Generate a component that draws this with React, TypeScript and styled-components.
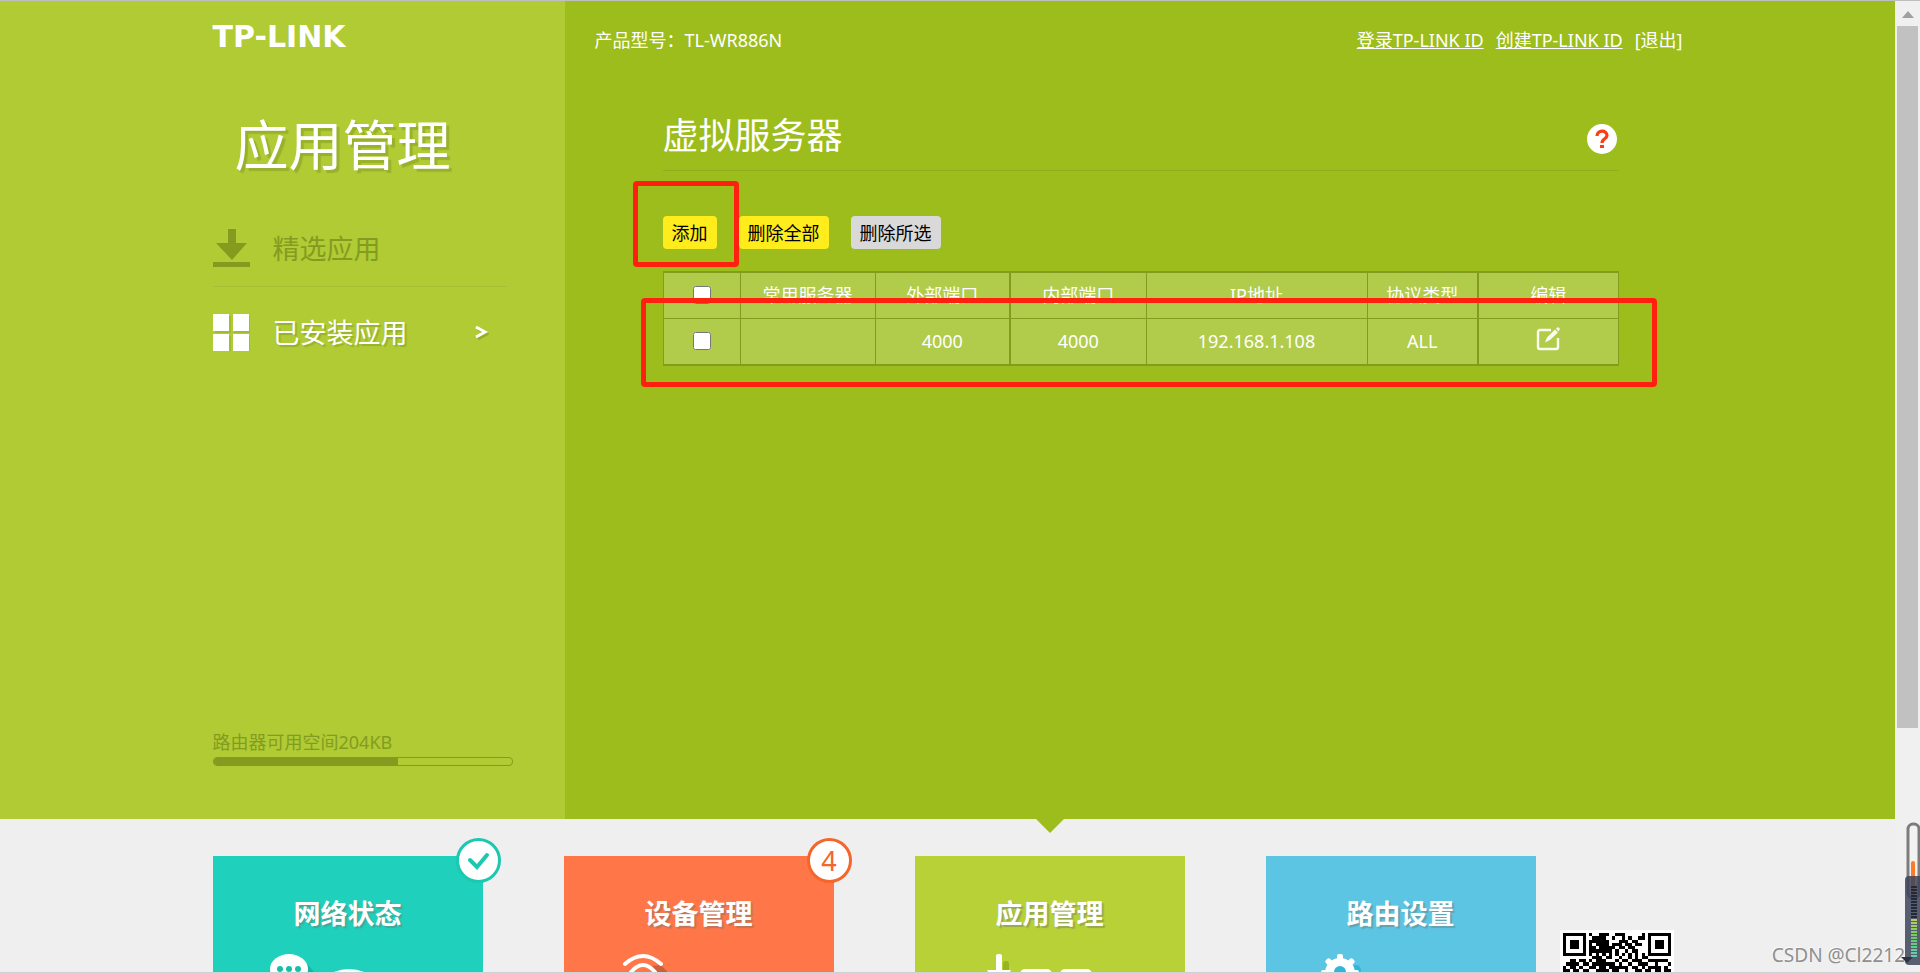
import React from "react";
import styled, { createGlobalStyle } from "styled-components";

const GlobalStyle = createGlobalStyle`
  * { box-sizing: border-box; }
  html, body, #root { height: 100%; }
  body {
    margin: 0;
    overflow: hidden;
    background: #efefef;
    color: #fff;
    font-family: "Noto Sans", "Noto Sans CJK SC", sans-serif;
    font-size: 18px;
    line-height: 24px;
  }
  a { color: inherit; }
  h1, h2, h3, p, ul { margin: 0; padding: 0; }
  button { font: inherit; border: 0; padding: 0; background: none; cursor: pointer; }
`;

const Window = styled.div`
  position: relative;
  display: flex;
  height: 100vh;
  overflow: hidden;
  border-top: 1px solid #bfbfbf;
  border-bottom: 1px solid #cdd1d8;
`;

const Page = styled.div`
  flex: 1;
  min-width: 0;
  display: flex;
  flex-direction: column;
`;

const Panels = styled.div`
  flex: 1;
  display: flex;
  min-height: 0;
`;

const Sidebar = styled.aside`
  width: calc(50% - 383px);
  min-width: 352px;
  display: flex;
  justify-content: flex-end;
  background: #b0cb34;
`;

const SidebarInner = styled.div`
  width: 352px;
  padding: 20px 52px 53px 0;
  display: flex;
  flex-direction: column;
`;

const Logo = styled.div`
  font-family: "DejaVu Sans", sans-serif;
  font-weight: 700;
  font-size: 30px;
  line-height: 32px;
`;

const Heading = styled.h1`
  margin: 60px 0 0 22px;
  font-size: 54px;
  line-height: 64px;
  font-weight: 400;
  text-shadow: 3px 3px 1px #98b12c;
`;

const Menu = styled.ul`
  list-style: none;
  width: 294px;
  margin-top: 34px;
`;

const MenuItem = styled.li<{ $active?: boolean }>`
  height: 75px;
  & + & {
    height: 93px;
    border-top: 1px solid #a6bf34;
  }
  a {
    display: flex;
    align-items: center;
    height: 100%;
    font-size: 27px;
    line-height: 36px;
    text-decoration: none;
    color: ${(p) => (p.$active ? "#fff" : "#839c20")};
    text-shadow: ${(p) => (p.$active ? "2px 2px 1px #98b12c" : "none")};
  }
  span { margin-left: 22px; flex: 1; }
  .chevron { margin-right: 18px; }
`;

const Storage = styled.label`
  margin-top: auto;
  color: #839c20;
  display: block;
`;

const Meter = styled.div`
  width: 300px;
  height: 9px;
  margin-top: 3px;
  border: 1px solid #839c20;
  border-radius: 4px;
  overflow: hidden;
`;

const MeterFill = styled.div`
  height: 100%;
  background: #839c20;
`;

const Main = styled.main`
  flex: 1;
  background: #9dbd1c;
`;

const MainInner = styled.div`
  max-width: 1118px;
`;

const TopBar = styled.header`
  display: flex;
  justify-content: space-between;
  padding: 27px 0 0 30px;
`;

const Links = styled.nav`
  display: flex;
  gap: 12px;
  a:last-child { text-decoration: none; }
`;

const Section = styled.section`
  margin: 55px 64px 0 98px;
`;

const SectionHead = styled.div`
  display: flex;
  align-items: center;
  justify-content: space-between;
  height: 64px;
  padding: 0 2px 5px 0;
  border-bottom: 1px solid #8fae1f;
  h2 { font-size: 36px; line-height: 48px; font-weight: 400; }
`;

const Help = styled.button`
  width: 30px;
  height: 30px;
  margin-top: 5px;
  svg { display: block; }
`;

const Actions = styled.div`
  display: flex;
  gap: 22px;
  margin: 45px 0 22px;
`;

const Button = styled.button<{ $muted?: boolean }>`
  height: 33px;
  padding: 0 9px;
  border-radius: 4px;
  color: #000;
  background: ${(p) => (p.$muted ? "#d9d9d9" : "#ffec1c")};
`;

const Marked = styled.div`
  position: relative;
`;

const Mark = styled.div<{ $inset: string }>`
  position: absolute;
  inset: ${(p) => p.$inset};
  border: 5px solid #ff2010;
  border-radius: 4px;
  pointer-events: none;
`;

const Table = styled.table`
  width: 100%;
  table-layout: fixed;
  border-collapse: collapse;
  background: #b0cc4a;
  border: 2px solid #839c20;
  border-width: 2px 1px;
  th, td {
    height: 46px;
    padding: 0;
    border: 1px solid #839c20;
    font-weight: 400;
    text-align: center;
    vertical-align: middle;
  }
  td { height: 47px; }
  th:nth-child(4), td:nth-child(4), th:nth-child(7), td:nth-child(7) { border-left-width: 2px; }
  input { display: block; width: 18px; height: 18px; margin: 0 auto; }
  td svg { display: block; margin: 0 auto 4px; }
`;

const Footer = styled.footer`
  position: relative;
  height: 153px;
  flex: none;
  display: flex;
  justify-content: center;
  background: #efefef;
  overflow: hidden;
`;

const FooterInner = styled.div`
  width: 1470px;
  flex: none;
  display: flex;
  gap: 24px;
  padding-top: 37px;
`;

const Tiles = styled.nav`
  display: flex;
  gap: 81px;
  flex: none;
`;

const Tile = styled.a<{ $color: string }>`
  position: relative;
  display: block;
  width: 270px;
  height: 270px;
  padding-top: 40px;
  background: ${(p) => p.$color};
  text-align: center;
  text-decoration: none;
  font-size: 27px;
  line-height: 36px;
  font-weight: 700;
  text-shadow: 2px 2px 1px rgba(110, 120, 110, 0.45);
  & > svg { display: block; margin-top: 14px; }
`;

const Badge = styled.span<{ $color: string }>`
  position: absolute;
  top: -18px;
  right: -18px;
  width: 45px;
  height: 45px;
  display: grid;
  place-items: center;
  border: 3px solid ${(p) => p.$color};
  border-radius: 50%;
  background: #fff;
  color: ${(p) => p.$color};
  font-weight: 400;
  text-shadow: none;
`;

const Pointer = styled.span`
  position: absolute;
  top: -37px;
  left: 121px;
  border: 14px solid transparent;
  border-top-color: #9dbd1c;
  border-bottom: 0;
`;

const QrFrame = styled.div`
  margin-top: 74px;
  width: 114px;
  height: 114px;
  padding: 3px;
  background: #fff;
  svg { display: block; }
`;

const ScrollTrack = styled.div`
  width: 25px;
  flex: none;
  display: flex;
  flex-direction: column;
  align-items: center;
  padding-top: 10px;
  background: #f0f0f0;
`;

const ScrollThumb = styled.div`
  width: 21px;
  height: 73%;
  margin-top: 8px;
  background: #c1c1c1;
`;

const Watermark = styled.div`
  position: absolute;
  right: 15px;
  bottom: 5px;
  font-size: 19px;
  color: #8f8f8f;
  text-shadow: -1px -1px 0 #fafafa;
`;

const Gauge = styled.svg`
  position: absolute;
  right: 0;
  bottom: 0;
`;

const QR_TOP = [
  "10011100111000001",
  "01111001001010011",
  "11111100011101100",
  "10111101110110110",
  "11011111011011000",
  "11111110100101100",
  "10101010101010101",
];
const FINDER = ["1111111", "1000001", "1011101", "1011101", "1011101", "1000001", "1111111"];
const QR_ROWS = [
  ...QR_TOP.map((mid, i) => `${FINDER[i]}0${mid}0${FINDER[i]}`),
  "000000000111011001001010110000000",
  "001101101011100010110111001111110",
  "011110110111111101001001110010001",
  "101101001101101111110110101111010",
  "110110110011110110010011011011011",
  "011011011110011011110101101101110",
];

const Qr = () => (
  <svg width="108" height="108" viewBox="0 0 33 33" shapeRendering="crispEdges" aria-hidden="true">
    {QR_ROWS.map((row, y) =>
      [...row].map((bit, x) => (bit === "1" ? <rect key={`${x}-${y}`} x={x} y={y} width="1" height="1" /> : null))
    )}
  </svg>
);

const DownloadIcon = () => (
  <svg width="38" height="40" viewBox="0 0 38 40" fill="#839c20">
    <path d="M15 0h8v14h11L19 31 3 14h12z" />
    <path d="M0 33h37v5H0z" />
  </svg>
);

const GridIcon = () => (
  <svg width="38" height="39" viewBox="0 0 38 39" fill="#fff">
    <path d="M2 2h16v17H2zM21 2h16v17H21zM2 22h16v15H2zM21 22h16v15H21z" fill="#94ad2a" opacity=".5" />
    <path d="M0 0h16v17H0zM20 0h16v17H20zM0 20h16v17H0zM20 20h16v17H20z" />
  </svg>
);

const HelpIcon = () => (
  <svg width="30" height="30" viewBox="0 0 30 30">
    <circle cx="15" cy="15" r="15" fill="#fff" />
    <path d="M10 12C10 5.500 20 5.500 20 11.500C20 15 15 14.500 15 19" fill="none" stroke="#ff3c10" strokeWidth="3.200" />
    <rect x="13" y="21" width="4" height="3" fill="#ff3c10" />
  </svg>
);

const EditIcon = () => (
  <svg width="24" height="24" viewBox="0 0 24 24" fill="none" stroke="#fbfcf0" strokeWidth="2.400">
    <path d="M15 3H4a2 2 0 0 0-2 2v15a2 2 0 0 0 2 2h16a2 2 0 0 0 2-2v-9" />
    <path d="M9 15.500l2-5L19 2.500l3 3L14 13z" fill="#fbfcf0" stroke="none" />
    <path d="M20 1.500l2-1.500 2 2-1.500 2.500z" fill="#fbfcf0" stroke="none" />
  </svg>
);

const StatusArt = () => (
  <svg width="270" height="120" viewBox="0 0 270 120">
    <path d="M92 15l24 30H76z" fill="#16b5a0" />
    <ellipse cx="76" cy="23" rx="19" ry="15" fill="#fff" />
    <g fill="#16c0a8">
      <circle cx="67" cy="23" r="3" />
      <circle cx="76" cy="23" r="3" />
      <circle cx="85" cy="23" r="3" />
    </g>
    <circle cx="136" cy="63" r="40" fill="#fff" />
  </svg>
);

const DeviceArt = () => (
  <svg width="270" height="120" viewBox="0 0 270 120" fill="none" strokeWidth="4" strokeLinecap="round">
    <path d="M97 19l14 15H70V22z" fill="#cf5f3a" />
    <path d="M61 18Q79 2 97 18" stroke="#fff" fill="#ff7648" />
    <path d="M67 26Q79 12 91 26" stroke="#fff" fill="#ff7648" />
  </svg>
);

const AppsArt = () => (
  <svg width="270" height="120" viewBox="0 0 270 120" fill="#fff">
    <rect x="88" y="15" width="6" height="20" rx="3" fill="#97b51c" />
    <rect x="81" y="8" width="6" height="30" rx="2" />
    <path d="M72 24h24L84 46z" />
    <rect x="105" y="23" width="32" height="32" rx="5" />
    <rect x="145" y="23" width="32" height="32" rx="5" />
  </svg>
);

const SettingsArt = () => (
  <svg width="270" height="120" viewBox="0 0 270 120" fill="#fff">
    <circle cx="90" cy="24" r="5" fill="#32b4dc" />
    <circle cx="74" cy="27" r="15" />
    {[0, 45, 90, 135, 180, 225, 270, 315].map((a) => (
      <rect key={a} x="71" y="8" width="6" height="8" rx="2" transform={`rotate(${a} 74 27)`} />
    ))}
    <circle cx="74" cy="26" r="6" fill="#32b4dc" />
  </svg>
);

const CheckIcon = () => (
  <svg width="24" height="20" viewBox="0 0 24 20" fill="none" stroke="#1cc8b0" strokeWidth="4" strokeLinecap="round">
    <path d="M4 9l7 7L21 4" />
  </svg>
);

const columns = [77, 135, 135, 136, 221, 111, 140];
const headers = ["常用服务器", "外部端口", "内部端口", "IP地址", "协议类型", "编辑"];

export default function App() {
  const used = 62;
  return (
    <>
      <GlobalStyle />
      <Window>
        <Page>
          <Panels>
            <Sidebar>
              <SidebarInner>
                <Logo>TP-LINK</Logo>
                <Heading>应用管理</Heading>
                <Menu>
                  <MenuItem>
                    <a href="#featured">
                      <DownloadIcon />
                      <span>精选应用</span>
                    </a>
                  </MenuItem>
                  <MenuItem $active>
                    <a href="#installed">
                      <GridIcon />
                      <span>已安装应用</span>
                      <svg className="chevron" width="14" height="16" viewBox="0 0 14 16" fill="none" strokeWidth="3">
                        <path d="M3 4l9 5-9 5" stroke="#94ad2a" />
                        <path d="M1 2l9 5-9 5" stroke="#fff" />
                      </svg>
                    </a>
                  </MenuItem>
                </Menu>
                <Storage>
                  路由器可用空间204KB
                  <Meter role="progressbar" aria-valuenow={used}>
                    <MeterFill style={{ width: `${used}%` }} />
                  </Meter>
                </Storage>
              </SidebarInner>
            </Sidebar>
            <Main>
              <MainInner>
                <TopBar>
                  <p>产品型号：TL-WR886N</p>
                  <Links>
                    <a href="#login">登录TP-LINK ID</a>
                    <a href="#create">创建TP-LINK ID</a>
                    <a href="#logout">[退出]</a>
                  </Links>
                </TopBar>
                <Section>
                  <SectionHead>
                    <h2>虚拟服务器</h2>
                    <Help aria-label="帮助">
                      <HelpIcon />
                    </Help>
                  </SectionHead>
                  <Actions>
                    <Marked>
                      <Button>添加</Button>
                      <Mark $inset="-35px -22px -18px -30px" />
                    </Marked>
                    <Button>删除全部</Button>
                    <Button $muted>删除所选</Button>
                  </Actions>
                  <Marked>
                    <Table>
                      <colgroup>
                        {columns.map((w, i) => (
                          <col key={i} width={w} />
                        ))}
                      </colgroup>
                      <thead>
                        <tr>
                          <th>
                            <input type="checkbox" aria-label="全选" />
                          </th>
                          {headers.map((h) => (
                            <th key={h}>{h}</th>
                          ))}
                        </tr>
                      </thead>
                      <tbody>
                        <tr>
                          <td>
                            <input type="checkbox" aria-label="选择" />
                          </td>
                          <td />
                          <td>4000</td>
                          <td>4000</td>
                          <td>192.168.1.108</td>
                          <td>ALL</td>
                          <td>
                            <EditIcon />
                          </td>
                        </tr>
                      </tbody>
                    </Table>
                    <Mark $inset="27px -38px -21px -22px" />
                  </Marked>
                </Section>
              </MainInner>
            </Main>
          </Panels>
          <Footer>
            <FooterInner>
              <Tiles>
                <Tile href="#status" $color="#1fd0bc">
                  网络状态
                  <StatusArt />
                  <Badge $color="#1cc8b0">
                    <CheckIcon />
                  </Badge>
                </Tile>
                <Tile href="#devices" $color="#ff7648">
                  设备管理
                  <DeviceArt />
                  <Badge $color="#f4662c">4</Badge>
                </Tile>
                <Tile href="#apps" $color="#b7d136">
                  <Pointer />
                  应用管理
                  <AppsArt />
                </Tile>
                <Tile href="#router" $color="#5cc5e4">
                  路由设置
                  <SettingsArt />
                </Tile>
              </Tiles>
              <QrFrame>
                <Qr />
              </QrFrame>
            </FooterInner>
          </Footer>
        </Page>
        <ScrollTrack>
          <svg width="12" height="7" viewBox="0 0 12 7" fill="#a0a0a0">
            <path d="M6 0l6 7H0z" />
          </svg>
          <ScrollThumb />
        </ScrollTrack>
        <Watermark>CSDN @Cl2212</Watermark>
        <Gauge width="20" height="150" viewBox="0 0 20 150">
          <rect x="8" y="2" width="11" height="74" rx="5" fill="#f2f2f2" stroke="#7c7c7c" strokeWidth="3" />
          <rect x="11" y="39" width="4" height="36" rx="2" fill="#ff7a24" />
          <path d="M20 54H9q-4 0-4 4v81q0 4 4 4h11z" fill="#3c4459" opacity=".85" />
          {Array.from({ length: 24 }, (_, i) => (
            <rect
              key={i}
              x="11"
              y={64 + i * 3}
              width="6"
              height="2"
              fill={i < 11 ? "#23283a" : `hsl(${70 + (i - 11) * 8} 50% 60%)`}
            />
          ))}
          <path d="M1 135h12l-6 6z" fill="#30323c" />
        </Gauge>
      </Window>
    </>
  );
}
